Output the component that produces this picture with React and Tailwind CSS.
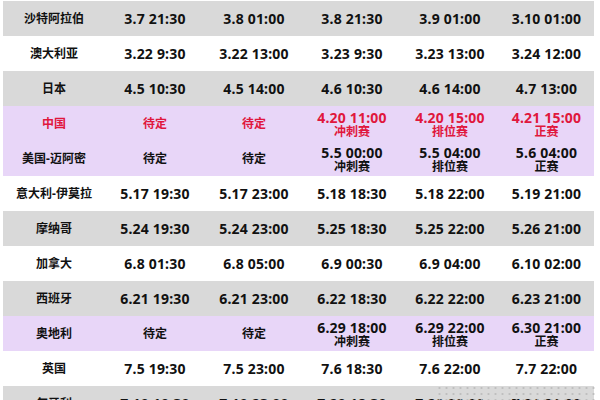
import React from 'react'

const rows = [
  { bg: 'gray', name: '沙特阿拉伯', cells: ['3.7 21:30', '3.8 01:00', '3.8 21:30', '3.9 01:00', '3.10 01:00'] },
  { bg: 'white', name: '澳大利亚', cells: ['3.22 9:30', '3.22 13:00', '3.23 9:30', '3.23 13:00', '3.24 12:00'] },
  { bg: 'gray', name: '日本', cells: ['4.5 10:30', '4.5 14:00', '4.6 10:30', '4.6 14:00', '4.7 13:00'] },
  { bg: 'purple', red: true, name: '中国', cells: ['待定', '待定', ['4.20 11:00', '冲刺赛'], ['4.20 15:00', '排位赛'], ['4.21 15:00', '正赛']] },
  { bg: 'purple', name: '美国-迈阿密', cells: ['待定', '待定', ['5.5 00:00', '冲刺赛'], ['5.5 04:00', '排位赛'], ['5.6 04:00', '正赛']] },
  { bg: 'white', name: '意大利-伊莫拉', cells: ['5.17 19:30', '5.17 23:00', '5.18 18:30', '5.18 22:00', '5.19 21:00'] },
  { bg: 'gray', name: '摩纳哥', cells: ['5.24 19:30', '5.24 23:00', '5.25 18:30', '5.25 22:00', '5.26 21:00'] },
  { bg: 'white', name: '加拿大', cells: ['6.8 01:30', '6.8 05:00', '6.9 00:30', '6.9 04:00', '6.10 02:00'] },
  { bg: 'gray', name: '西班牙', cells: ['6.21 19:30', '6.21 23:00', '6.22 18:30', '6.22 22:00', '6.23 21:00'] },
  { bg: 'purple', name: '奥地利', cells: ['待定', '待定', ['6.29 18:00', '冲刺赛'], ['6.29 22:00', '排位赛'], ['6.30 21:00', '正赛']] },
  { bg: 'white', name: '英国', cells: ['7.5 19:30', '7.5 23:00', '7.6 18:30', '7.6 22:00', '7.7 22:00'] },
  { bg: 'gray', name: '匈牙利', cells: ['7.19 19:30', '7.19 23:00', '7.20 18:30', '7.20 22:00', '7.21 21:00'] },
]

const bgClass = {
  gray: 'bg-[#d9d9d9]',
  white: 'bg-white',
  purple: 'bg-[#e8d6f8]',
}

function Cell({ value, red }) {
  const color = red ? 'text-[#e0173d]' : 'text-[#111]'
  if (Array.isArray(value)) {
    return (
      <div className={`flex flex-col items-center justify-center ${color}`}>
        <span className="text-[14px] leading-[15px] font-bold tracking-[0.2px]">{value[0]}</span>
        <span className="text-[12px] leading-[13px] font-bold">{value[1]}</span>
      </div>
    )
  }
  const cjk = /[\u4e00-\u9fff]/.test(value)
  return (
    <div className={`flex items-center justify-center font-bold ${color} ${cjk ? 'text-[12px]' : 'text-[14px] tracking-[0.2px]'}`}>
      {value}
    </div>
  )
}

export default function App() {
  return (
    <div
      className="relative w-[600px] h-[400px] overflow-hidden bg-white pl-[3px] pt-[1px]"
      style={{ fontFamily: '"Noto Sans", "Noto Sans CJK SC", sans-serif' }}
    >
      <div className="w-[591px]">
        {rows.map((r, i) => (
          <div
            key={i}
            className={`grid grid-cols-[102px_100px_98px_98px_98px_95px] h-[35px] ${bgClass[r.bg]}`}
          >
            <div className={`flex items-center justify-center text-[12px] font-bold ${r.red ? 'text-[#e0173d]' : 'text-[#111]'}`}>
              {r.name}
            </div>
            {r.cells.map((c, j) => (
              <Cell key={j} value={c} red={r.red} />
            ))}
          </div>
        ))}
      </div>
      {/* watermark dots */}
      <div className="absolute left-[436px] top-[385px] w-[160px] h-[20px] bg-[radial-gradient(circle,#b8b8b8_1px,transparent_1.2px)] bg-[size:7px_6px] opacity-80" />
    </div>
  )
}
